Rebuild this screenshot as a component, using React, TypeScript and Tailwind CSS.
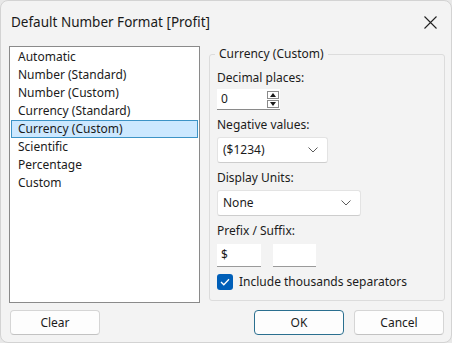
const items = [
  "Automatic",
  "Number (Standard)",
  "Number (Custom)",
  "Currency (Standard)",
  "Currency (Custom)",
  "Scientific",
  "Percentage",
  "Custom",
];

function Chevron() {
  return (
    <svg width="10" height="6" viewBox="0 0 10 6" className="text-[#5c5c5c]">
      <polyline points="0.5,0.5 5,5 9.5,0.5" fill="none" stroke="currentColor" strokeWidth="1" />
    </svg>
  );
}

function Select({ value, width }: { value: string; width: string }) {
  return (
    <div
      className={`${width} h-[26px] flex items-center justify-between pl-[5px] pr-[9px] bg-white border border-[#e3e3e3] border-b-[#cdcdcd] rounded-[3px]`}
    >
      <span>{value}</span>
      <Chevron />
    </div>
  );
}

export default function App() {
  return (
    <div
      className="w-[452px] h-[343px] bg-[#e8e8e8] text-[12px] text-[#1b1b1b] leading-[16px]"
      style={{ fontFamily: '"Segoe UI", "Noto Sans", sans-serif' }}
    >
      <div className="w-full h-full flex flex-col bg-[#f3f3f3] border border-[#d3d3d3] rounded-[8px] overflow-hidden">
        {/* title bar */}
        <div className="h-[42px] shrink-0 flex items-center justify-between pl-[10px] pr-[14px]">
          <span className="text-[13.5px] text-[#1a1a1a]">Default Number Format [Profit]</span>
          <svg width="13" height="13" viewBox="0 0 13 13" className="text-[#222]">
            <path d="M0.5 0.5 L12.5 12.5 M12.5 0.5 L0.5 12.5" stroke="currentColor" strokeWidth="1.1" />
          </svg>
        </div>

        <div className="flex pl-[8px] pt-[3px] gap-[9px]">
          {/* list */}
          <div className="w-[191px] h-[257px] bg-white border border-[#8a8a8a] py-[1px]">
            {items.map((it) => (
              <div
                key={it}
                className={
                  it === "Currency (Custom)"
                    ? "mx-[1px] h-[18px] leading-[16px] pl-[6px] bg-[#cce8ff] border border-[#3c93c6]"
                    : "mx-[1px] h-[18px] leading-[18px] pl-[7px]"
                }
              >
                {it}
              </div>
            ))}
          </div>

          {/* group box */}
          <div className="relative mt-[8px] w-[236px] h-[247px] border border-[#dcdcdc] rounded-[3px] pl-[7px] pt-[15px]">
            <span className="absolute -top-[9px] left-[5px] px-[4px] bg-[#f3f3f3]">Currency (Custom)</span>

            <div>Decimal places:</div>
            <div className="mt-[3px] w-[63px] h-[21px] flex items-center justify-between bg-white border-b border-[#8a8a8a] pl-[4px] pr-[1px]">
              <span>0</span>
              <div className="flex flex-col gap-[1px]">
                <div className="w-[12px] h-[8px] border border-[#8a8a8a] flex items-center justify-center">
                  <svg width="6" height="4" viewBox="0 0 6 4"><polygon points="3,0 6,4 0,4" fill="#1a1a1a" /></svg>
                </div>
                <div className="w-[12px] h-[8px] border border-[#8a8a8a] flex items-center justify-center">
                  <svg width="6" height="4" viewBox="0 0 6 4"><polygon points="0,0 6,0 3,4" fill="#1a1a1a" /></svg>
                </div>
              </div>
            </div>

            <div className="mt-[7px]">Negative values:</div>
            <div className="mt-[4px]">
              <Select value="($1234)" width="w-[111px]" />
            </div>

            <div className="mt-[7px]">Display Units:</div>
            <div className="mt-[4px]">
              <Select value="None" width="w-[144px]" />
            </div>

            <div className="mt-[7px]">Prefix / Suffix:</div>
            <div className="mt-[5px] flex gap-[12px]">
              <div className="w-[44px] h-[23px] flex items-center pl-[4px] bg-white border-b border-[#9a9a9a]">$</div>
              <div className="w-[43px] h-[23px] bg-white border-b border-[#9a9a9a]" />
            </div>

            <div className="mt-[7px] flex items-center gap-[6px]">
              <div className="w-[16px] h-[16px] rounded-[3px] bg-[#005fb8] flex items-center justify-center">
                <svg width="10" height="8" viewBox="0 0 10 8">
                  <polyline points="1,4 3.8,6.8 9,1.2" fill="none" stroke="white" strokeWidth="1.3" />
                </svg>
              </div>
              <span>Include thousands separators</span>
            </div>
          </div>
        </div>

        {/* buttons */}
        <div className="flex justify-between pl-[9px] pr-[7px] mt-[7px]">
          <button className="w-[90px] h-[25px] bg-[#fdfdfd] border border-[#d5d5d5] border-b-[#c2c2c2] rounded-[4px]">Clear</button>
          <div className="flex gap-[10px]">
            <button className="w-[90px] h-[25px] bg-[#fdfdfd] border border-[#2a6f8f] rounded-[4px]">OK</button>
            <button className="w-[90px] h-[25px] bg-[#fdfdfd] border border-[#d5d5d5] border-b-[#c2c2c2] rounded-[4px]">Cancel</button>
          </div>
        </div>
      </div>
    </div>
  );
}
